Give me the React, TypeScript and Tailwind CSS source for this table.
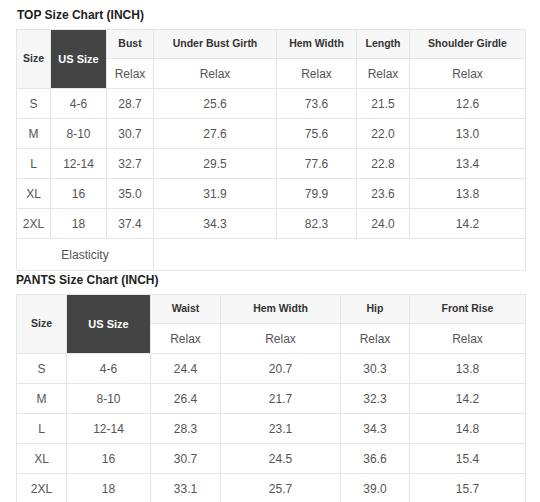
const TOP_COLS = [34, 56, 47, 123, 80, 53, 116];
const TOP_HEADS = ['Bust', 'Under Bust Girth', 'Hem Width', 'Length', 'Shoulder Girdle'];
const TOP_ROWS = [
  ['S', '4-6', '28.7', '25.6', '73.6', '21.5', '12.6'],
  ['M', '8-10', '30.7', '27.6', '75.6', '22.0', '13.0'],
  ['L', '12-14', '32.7', '29.5', '77.6', '22.8', '13.4'],
  ['XL', '16', '35.0', '31.9', '79.9', '23.6', '13.8'],
  ['2XL', '18', '37.4', '34.3', '82.3', '24.0', '14.2'],
];

const PANTS_COLS = [50, 84, 70, 120, 69, 116];
const PANTS_HEADS = ['Waist', 'Hem Width', 'Hip', 'Front Rise'];
const PANTS_ROWS = [
  ['S', '4-6', '24.4', '20.7', '30.3', '13.8'],
  ['M', '8-10', '26.4', '21.7', '32.3', '14.2'],
  ['L', '12-14', '28.3', '23.1', '34.3', '14.8'],
  ['XL', '16', '30.7', '24.5', '36.6', '15.4'],
  ['2XL', '18', '33.1', '25.7', '39.0', '15.7'],
];

const cell = 'border border-[#e6e6e6] text-center align-middle p-0';
const head = `${cell} bg-[#f7f7f7] text-[10.5px] font-bold text-[#333]`;
const data = `${cell} text-[12px] text-[#555]`;

function SizeTable({
  cols,
  heads,
  rows,
  elasticity,
}: {
  cols: number[];
  heads: string[];
  rows: string[][];
  elasticity?: boolean;
}) {
  return (
    <table className="table-fixed border-collapse w-[509px]">
      <colgroup>
        {cols.map((w, i) => (
          <col key={i} style={{ width: w }} />
        ))}
      </colgroup>
      <tbody>
        <tr className="h-[29px]">
          <td rowSpan={2} className={head}>
            Size
          </td>
          <td rowSpan={2} className={`${cell} bg-[#444] text-[11px] font-bold text-white`}>
            US Size
          </td>
          {heads.map((h) => (
            <td key={h} className={head}>
              {h}
            </td>
          ))}
        </tr>
        <tr className="h-[30px]">
          {heads.map((h) => (
            <td key={h} className={data}>
              Relax
            </td>
          ))}
        </tr>
        {rows.map((r) => (
          <tr key={r[0]} className="h-[30px]">
            {r.map((v, i) => (
              <td key={i} className={data}>
                {v}
              </td>
            ))}
          </tr>
        ))}
        {elasticity && (
          <tr className="h-[32px]">
            <td colSpan={3} className={data}>
              Elasticity
            </td>
            <td colSpan={4} className={data}></td>
          </tr>
        )}
      </tbody>
    </table>
  );
}

export default function App() {
  return (
    <div className="w-[540px] h-[502px] overflow-hidden bg-white pl-4 font-['Liberation_Sans',Arial,sans-serif]">
      <div className="h-[29px] flex items-center pl-[1px] text-[12px] font-bold text-[#222]">
        TOP Size Chart (INCH)
      </div>
      <SizeTable cols={TOP_COLS} heads={TOP_HEADS} rows={TOP_ROWS} elasticity />
      <div className="h-[23px] flex items-center pb-[6px] text-[12px] font-bold text-[#222]">
        PANTS Size Chart (INCH)
      </div>
      <SizeTable cols={PANTS_COLS} heads={PANTS_HEADS} rows={PANTS_ROWS} />
    </div>
  );
}
